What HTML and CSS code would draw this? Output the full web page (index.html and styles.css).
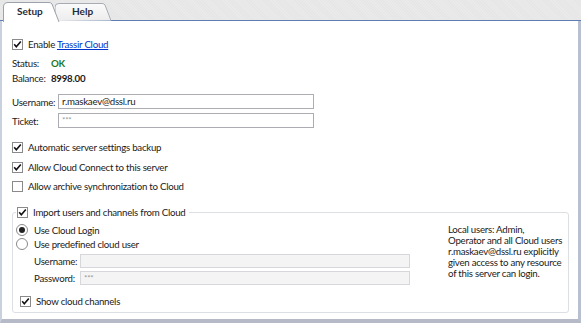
FILE: index.html
```html
<!DOCTYPE html>
<html>
<head>
<meta charset="utf-8">
<link rel="stylesheet" href="styles.css">
</head>
<body>
<div class="window">
  <div class="tabbar">
    <div class="tab tab-setup">
      <svg class="tab-shape" width="58" height="20" viewBox="0 0 58 20"><path d="M0.5 20 V5 Q0.5 0.5 5 0.5 H46 Q48 0.5 49 2 L56 20" fill="#ffffff" stroke="#9da3ad"/></svg>
      <span class="tab-label">Setup</span>
    </div>
    <div class="tab tab-help">
      <svg class="tab-shape" width="58" height="18" viewBox="0 0 58 18"><defs><linearGradient id="hg" x1="0" y1="0" x2="0" y2="1"><stop offset="0" stop-color="#fbfbfb"/><stop offset="1" stop-color="#ececec"/></linearGradient></defs><path d="M0 18 V4 Q0 0.5 4 0.5 H47 Q49 0.5 50 2 L56 17.5" fill="url(#hg)" stroke="#a7acb4"/></svg>
      <span class="tab-label">Help</span>
    </div>
  </div>
  <div class="panel">
    <label class="row row-enable">
      <span class="cb checked"><svg width="11" height="11" viewBox="0 0 11 11"><path d="M2.2 5.3 L4.3 7.8 L8.8 2.4" fill="none" stroke="#111" stroke-width="1.6"/></svg></span>
      <span>Enable <a class="link">Trassir Cloud</a></span>
    </label>
    <div class="row row-status"><span class="key">Status:</span><span class="ok">OK</span></div>
    <div class="row row-balance"><span class="key">Balance:</span><span class="bal">8998.00</span></div>
    <div class="field row-user"><span class="flabel">Username:</span><div class="input">r.maskaev@dssl.ru</div></div>
    <div class="field row-ticket"><span class="flabel">Ticket:</span><div class="input dim">***</div></div>
    <label class="row row-auto">
      <span class="cb checked"><svg width="11" height="11" viewBox="0 0 11 11"><path d="M2.2 5.3 L4.3 7.8 L8.8 2.4" fill="none" stroke="#111" stroke-width="1.6"/></svg></span>
      <span>Automatic server settings backup</span>
    </label>
    <label class="row row-connect">
      <span class="cb checked"><svg width="11" height="11" viewBox="0 0 11 11"><path d="M2.2 5.3 L4.3 7.8 L8.8 2.4" fill="none" stroke="#111" stroke-width="1.6"/></svg></span>
      <span>Allow Cloud Connect to this server</span>
    </label>
    <label class="row row-archive">
      <span class="cb"></span>
      <span>Allow archive synchronization to Cloud</span>
    </label>
    <fieldset class="group">
      <legend class="legend">
        <span class="cb checked"><svg width="11" height="11" viewBox="0 0 11 11"><path d="M2.2 5.3 L4.3 7.8 L8.8 2.4" fill="none" stroke="#111" stroke-width="1.6"/></svg></span>
        <span>Import users and channels from Cloud</span>
      </legend>
      <div class="group-body">
        <div class="group-left">
          <div class="row row-radio1"><span class="radio on"></span><span>Use Cloud Login</span></div>
          <div class="row row-radio2"><span class="radio"></span><span>Use predefined cloud user</span></div>
          <div class="field sub row-guser"><span class="flabel sub-label">Username:</span><div class="input disabled"></div></div>
          <div class="field sub row-gpass"><span class="flabel sub-label">Password:</span><div class="input disabled dim">***</div></div>
          <label class="row row-show">
            <span class="cb checked"><svg width="11" height="11" viewBox="0 0 11 11"><path d="M2.2 5.3 L4.3 7.8 L8.8 2.4" fill="none" stroke="#111" stroke-width="1.6"/></svg></span>
            <span>Show cloud channels</span>
          </label>
        </div>
        <div class="note">Local users: Admin,<br>Operator and all Cloud users<br>r.maskaev@dssl.ru explicitly<br>given access to any resource<br>of this server can login.</div>
      </div>
    </fieldset>
  </div>
</div>
</body>
</html>
```
FILE: styles.css
```css
* { box-sizing: border-box; }
html, body { margin: 0; padding: 0; }
body {
  width: 581px;
  height: 323px;
  overflow: hidden;
  font-family: Lato, "Noto Sans", sans-serif;
  font-size: 9.7px;
  letter-spacing: -0.25px;
  color: #1a1a1a;
  background: #e9e9e9;
}
.window {
  display: flex;
  flex-direction: column;
  width: 581px;
  height: 323px;
}
.tabbar {
  height: 21px;
  display: flex;
  align-items: flex-end;
  padding-left: 3px;
  background: repeating-linear-gradient(45deg, #e6e6e6 0 1px, #eaeaea 1px 2px);
  border-bottom: 1px solid #5f7db3;
  position: relative;
}
.tab {
  position: relative;
  height: 20px;
  display: flex;
  align-items: center;
  font-weight: bold;
  font-size: 10px;
  letter-spacing: 0;
  color: #1f2a3a;
}
.tab-shape { position: absolute; left: 0; bottom: -1px; }
.tab-label { position: relative; }
.tab-setup { width: 52px; z-index: 2; margin-bottom: -1px; height: 21px; }
.tab-setup .tab-label { margin-left: 14px; }
.tab-help { width: 58px; height: 18px; }
.tab-help .tab-label { margin-left: 17px; }
.panel {
  flex: 1;
  background: #fff;
  border-left: 2px solid #c9d1df;
  border-right: 3px solid #b8bfcf;
  border-bottom: 4px solid #b5bac6;
  padding: 16px 0 0 10px;
  display: flex;
  flex-direction: column;
}
.row {
  display: flex;
  align-items: center;
  height: 14px;
  white-space: nowrap;
}
.cb {
  width: 11px;
  height: 11px;
  border: 1px solid #8a8a8a;
  background: #fff;
  margin-right: 5px;
  display: inline-flex;
  align-items: center;
  justify-content: center;
  flex: none;
}
.cb svg { display: block; margin: -1px; }
.link { color: #0033cc; text-decoration: underline; }
.key { width: 39px; color: #222; }
.row-status { margin-top: 5px; }
.row-balance { margin-top: 1px; }
.ok { color: #1e7a1e; font-weight: bold; }
.bal { font-weight: bold; }
.field {
  display: flex;
  align-items: center;
  height: 15px;
}
.flabel { width: 46px; flex: none; }
.input {
  width: 256px;
  height: 15px;
  border: 1px solid #abadb3;
  background: #fff;
  padding-left: 3px;
  line-height: 13px;
  white-space: nowrap;
}
.input.dim { color: #9a9a9a; font-size: 8px; }
.row-user { margin-top: 9px; }
.row-ticket { margin-top: 4px; }
.row-auto { margin-top: 12px; }
.row-connect { margin-top: 6px; }
.row-archive { margin-top: 5px; }
.group {
  margin: 12px 0 0 0;
  width: 557px;
  height: 108px;
  border: 1px solid #dcdfe3;
  border-radius: 3px;
  padding: 0 0 0 3px;
}
.legend {
  display: flex;
  align-items: center;
  padding: 0 3px 0 1px;
  margin-left: 0;
  height: 14px;
  white-space: nowrap;
}
.group-body {
  display: flex;
  justify-content: space-between;
}
.group-left { display: flex; flex-direction: column; }
.radio {
  width: 12px;
  height: 12px;
  border: 1px solid #8a8a8a;
  border-radius: 50%;
  background: #fff;
  margin-right: 6px;
  display: inline-flex;
  align-items: center;
  justify-content: center;
  flex: none;
}
.radio.on::after {
  content: "";
  width: 6px;
  height: 6px;
  border-radius: 50%;
  background: #222;
}
.row-radio1 { margin-top: 4px; }
.row-radio2 { margin-top: 0px; }
.sub { padding-left: 18px; height: 14px; }
.sub-label { width: 46px; }
.input.disabled { width: 330px; height: 14px; background: #f4f4f4; border-color: #d5d7da; line-height: 12px; }
.row-guser { margin-top: 3px; }
.row-gpass { margin-top: 3px; }
.row-show { margin-top: 9px; padding-left: 4px; }
.note {
  width: 120px;
  margin-right: 0;
  margin-top: 5px;
  line-height: 11px;
  color: #1a1a1a;
  white-space: nowrap;
}
```
